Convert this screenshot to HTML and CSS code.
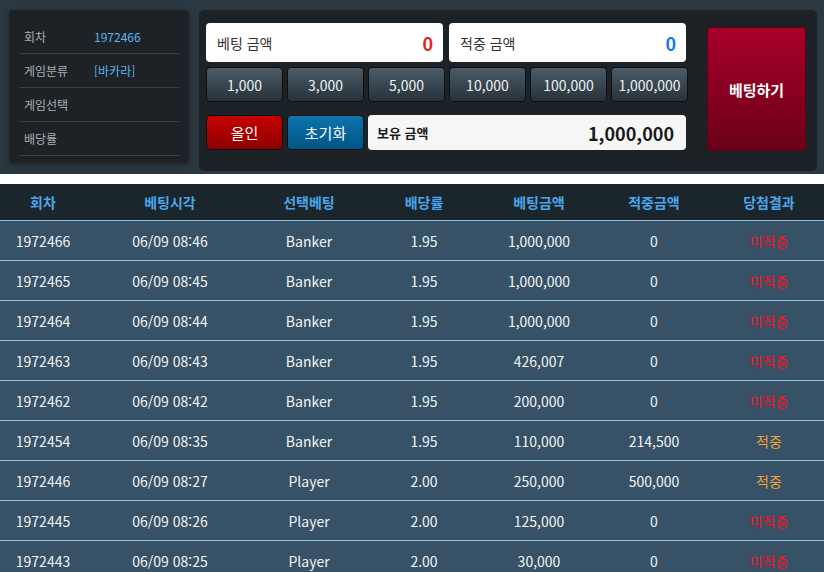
FILE: index.html
```html
<!DOCTYPE html>
<html lang="ko">
<head>
  <meta charset="UTF-8" />
  <meta name="viewport" content="width=device-width, initial-scale=1.0"/>
  <title>베팅</title>
  <link rel="stylesheet" href="styles.css">
</head>
<body>

<div class="top">
  <div class="info">
    <div class="info-row"><span class="label">회차</span><span class="value">1972466</span></div>
    <div class="info-row"><span class="label">게임분류</span><span class="value">[바카라]</span></div>
    <div class="info-row"><span class="label">게임선택</span><span class="value"></span></div>
    <div class="info-row"><span class="label">배당률</span><span class="value"></span></div>
  </div>

  <div class="bet">
    <div class="bet-left">
      <div class="amounts">
        <div class="amount-box"><span>베팅 금액</span><b class="red">0</b></div>
        <div class="amount-box"><span>적중 금액</span><b class="blue">0</b></div>
      </div>
      <div class="chips">
        <button class="chip">1,000</button>
        <button class="chip">3,000</button>
        <button class="chip">5,000</button>
        <button class="chip">10,000</button>
        <button class="chip">100,000</button>
        <button class="chip">1,000,000</button>
      </div>
      <div class="actions">
        <button class="btn btn-allin">올인</button>
        <button class="btn btn-reset">초기화</button>
        <div class="balance"><span>보유 금액</span><b>1,000,000</b></div>
      </div>
    </div>
    <button class="btn-bet">베팅하기</button>
  </div>
</div>

<table class="history">
  <colgroup>
    <col style="width:86px"><col style="width:168px"><col style="width:110px"><col style="width:120px">
    <col style="width:110px"><col style="width:120px"><col style="width:110px">
  </colgroup>
  <thead>
    <tr><th>회차</th><th>베팅시각</th><th>선택베팅</th><th>배당률</th><th>베팅금액</th><th>적중금액</th><th>당첨결과</th></tr>
  </thead>
  <tbody>
    <tr><td>1972466</td><td>06/09 08:46</td><td>Banker</td><td>1.95</td><td>1,000,000</td><td>0</td><td class="lose">미적중</td></tr>
    <tr><td>1972465</td><td>06/09 08:45</td><td>Banker</td><td>1.95</td><td>1,000,000</td><td>0</td><td class="lose">미적중</td></tr>
    <tr><td>1972464</td><td>06/09 08:44</td><td>Banker</td><td>1.95</td><td>1,000,000</td><td>0</td><td class="lose">미적중</td></tr>
    <tr><td>1972463</td><td>06/09 08:43</td><td>Banker</td><td>1.95</td><td>426,007</td><td>0</td><td class="lose">미적중</td></tr>
    <tr><td>1972462</td><td>06/09 08:42</td><td>Banker</td><td>1.95</td><td>200,000</td><td>0</td><td class="lose">미적중</td></tr>
    <tr><td>1972454</td><td>06/09 08:35</td><td>Banker</td><td>1.95</td><td>110,000</td><td>214,500</td><td class="win">적중</td></tr>
    <tr><td>1972446</td><td>06/09 08:27</td><td>Player</td><td>2.00</td><td>250,000</td><td>500,000</td><td class="win">적중</td></tr>
    <tr><td>1972445</td><td>06/09 08:26</td><td>Player</td><td>2.00</td><td>125,000</td><td>0</td><td class="lose">미적중</td></tr>
    <tr><td>1972443</td><td>06/09 08:25</td><td>Player</td><td>2.00</td><td>30,000</td><td>0</td><td class="lose">미적중</td></tr>
  </tbody>
</table>

</body>
</html>
```

FILE: styles.css
```css
body {
  font-family: "Noto Sans CJK KR", "Noto Sans", sans-serif;
  background: #fff;
  margin: 0;
  padding: 0;
}
button {
  font-family: inherit;
  cursor: pointer;
}
.top {
  background: #2c3841;
  height: 174px;
  box-sizing: border-box;
  padding: 10px 7px 0 9px;
  display: flex;
  align-items: flex-start;
  gap: 10px;
  margin-bottom: 10px;
}
.info {
  width: 180px;
  height: 153px;
  box-sizing: border-box;
  background: #1d2226;
  border-radius: 4px;
  box-shadow: 0 2px 6px rgba(0,0,0,0.35);
  padding: 10px 10px 0;
}
.info-row {
  display: flex;
  align-items: center;
  height: 33px;
  border-bottom: 1px solid #3a4046;
  font-size: 12px;
}
.info-row .label {
  width: 70px;
  padding-left: 5px;
  color: #a9afb4;
}
.info-row .value {
  color: #5ab4ee;
}
.bet {
  flex: 1;
  height: 161px;
  box-sizing: border-box;
  background: #1d2226;
  border-radius: 5px;
  padding: 13px 11px 0 7px;
  display: flex;
  align-items: flex-start;
}
.bet-left {
  width: 482px;
}
.amounts {
  display: flex;
  gap: 6px;
}
.amount-box {
  width: 237px;
  height: 39px;
  box-sizing: border-box;
  background: #fff;
  border-radius: 4px;
  display: flex;
  align-items: center;
  justify-content: space-between;
  padding: 0 10px 0 11px;
  font-size: 14px;
  color: #333;
}
.amount-box b {
  font-size: 18px;
}
.red { color: #e52424; }
.blue { color: #1a7ae6; }
.chips {
  display: flex;
  gap: 4px;
  margin-top: 5px;
}
.chip {
  flex: 1;
  height: 35px;
  border: 1px solid #0d1013;
  border-radius: 4px;
  background: linear-gradient(#4b5b67, #28323a);
  color: #eef2f5;
  font-size: 14px;
  padding: 0;
}
.actions {
  display: flex;
  gap: 4px;
  margin-top: 13px;
}
.btn {
  width: 77px;
  height: 35px;
  border: 1px solid #0d1013;
  border-radius: 4px;
  color: #fff;
  font-size: 15px;
  padding: 0;
}
.btn-allin {
  background: linear-gradient(#c40000, #8e0000);
}
.btn-reset {
  background: linear-gradient(#0c74ae, #005584);
}
.balance {
  width: 318px;
  height: 35px;
  box-sizing: border-box;
  background: #f6f6f6;
  border-radius: 4px;
  display: flex;
  align-items: center;
  justify-content: space-between;
  padding: 0 12px 0 9px;
  color: #1a1a1a;
}
.balance span {
  font-size: 13px;
  font-weight: bold;
}
.balance b {
  font-size: 18px;
}
.btn-bet {
  margin: 4px 0 0 19px;
  width: 99px;
  height: 124px;
  border: 1px solid #5c0012;
  border-radius: 3px;
  background: linear-gradient(#a8002a, #6c0018);
  color: #fff;
  font-size: 15px;
  font-weight: bold;
  padding: 0;
}
.history {
  width: 824px;
  border-collapse: collapse;
  table-layout: fixed;
  font-size: 14px;
}
.history th {
  background: #1b252c;
  color: #4aa6ea;
  height: 36px;
  padding: 0;
  border-bottom: 1px solid #8ec6e4;
}
.history td {
  background: #375266;
  color: #f2f4f6;
  height: 39px;
  padding: 0;
  text-align: center;
  border-bottom: 1px solid #8ec6e4;
}
.history td.lose {
  color: #ff1020;
}
.history td.win {
  color: #f2a23a;
}
```
